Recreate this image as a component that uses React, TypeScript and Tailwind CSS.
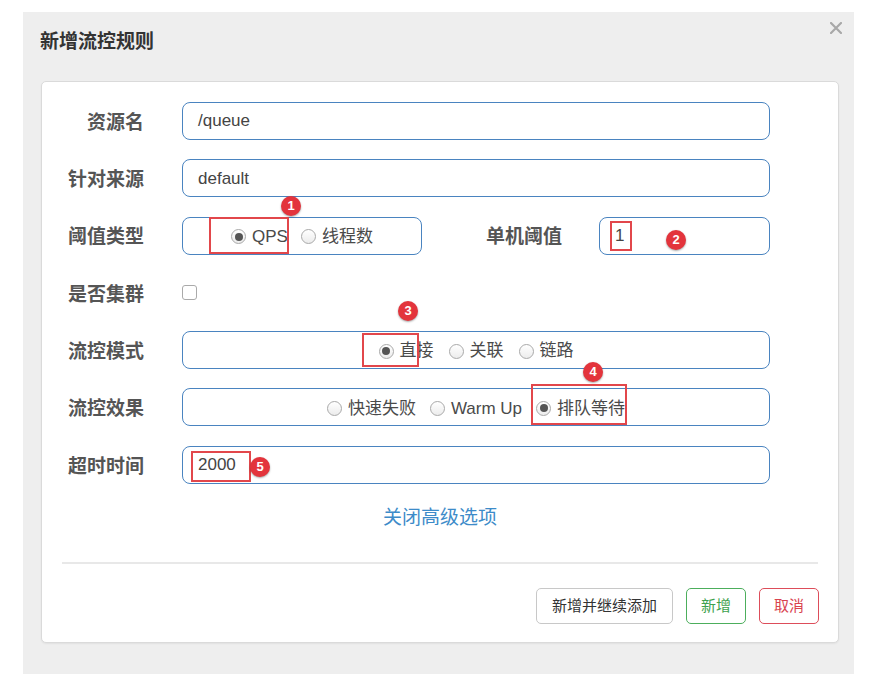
import React from 'react'

const font = { fontFamily: '"Liberation Sans", "Noto Sans CJK SC", sans-serif' }

function Radio({ checked }: { checked?: boolean }) {
  return (
    <span className="inline-flex h-[15px] w-[15px] shrink-0 items-center justify-center rounded-full border border-[#a9a9a9] bg-gradient-to-b from-white to-[#ececec]">
      {checked && <span className="h-[8px] w-[8px] rounded-full bg-[#555]" />}
    </span>
  )
}

function RadioItem({ label, checked }: { label: string; checked?: boolean }) {
  return (
    <label className="flex items-center gap-[6px] text-[#4a4a4a]">
      <Radio checked={checked} />
      <span>{label}</span>
    </label>
  )
}

function Label({ children, w = 'w-[102px]' }: { children: React.ReactNode; w?: string }) {
  return <div className={`${w} shrink-0 pt-[4px] text-right text-[19px] font-bold text-[#555]`}>{children}</div>
}

const box = 'h-[38px] rounded-[8px] border-[1.5px] border-[#4a84c0] bg-white text-[17px] text-[#444]'

function Badge({ n, x, y }: { n: number; x: number; y: number }) {
  return (
    <div
      className="absolute flex h-[20px] w-[20px] items-center justify-center rounded-full bg-[#e3343c] text-[13px] font-bold text-white shadow-[0_1px_2px_rgba(0,0,0,0.35)]"
      style={{ left: x - 10, top: y - 10 }}
    >
      {n}
    </div>
  )
}

function Mark({ x, y, w, h }: { x: number; y: number; w: number; h: number }) {
  return <div className="absolute border-2 border-[#e2474b]" style={{ left: x, top: y, width: w, height: h }} />
}

export default function App() {
  return (
    <div className="relative h-[694px] w-[882px] bg-white" style={font}>
      <div className="pl-[23px] pt-[12px]">
        <div className="relative h-[662px] w-[831px] bg-[#eeeeee]">
          <div className="h-[69px] pl-[17px] pt-[19px] text-[19px] font-bold leading-[22px] text-[#333]">
            新增流控规则
          </div>
          <svg className="absolute left-[807px] top-[10px]" width="12" height="12" viewBox="0 0 12 12">
            <path d="M1 1 L11 11 M11 1 L1 11" stroke="#a8a8a8" strokeWidth="2.2" strokeLinecap="round" />
          </svg>

          <div className="ml-[18px] flex h-[562px] w-[798px] flex-col rounded-[5px] border border-[#dadada] bg-white pt-[20px] shadow-[0_1px_2px_rgba(0,0,0,0.06)]">
            <div className="flex flex-col gap-[19.3px]">
              <div className="flex items-center">
                <Label>资源名</Label>
                <div className={`${box} ml-[38px] flex w-[588px] items-center px-[15px]`}>/queue</div>
              </div>
              <div className="flex items-center">
                <Label>针对来源</Label>
                <div className={`${box} ml-[38px] flex w-[588px] items-center px-[15px]`}>default</div>
              </div>
              <div className="flex items-center">
                <Label>阈值类型</Label>
                <div className={`${box} ml-[38px] flex w-[240px] items-center justify-center gap-[13px] pt-[2px]`}>
                  <RadioItem label="QPS" checked />
                  <RadioItem label="线程数" />
                </div>
                <Label w="w-[140px]">单机阈值</Label>
                <div className={`${box} ml-[37px] flex w-[171px] items-center px-[15px]`}>1</div>
              </div>
              <div className="flex h-[38px] items-center">
                <Label>是否集群</Label>
                <span className="ml-[38px] h-[15px] w-[15px] rounded-[3px] border border-[#aaa] bg-white" />
              </div>
              <div className="flex items-center">
                <Label>流控模式</Label>
                <div className={`${box} ml-[38px] flex w-[588px] items-center justify-center gap-[15px] pt-[2px]`}>
                  <RadioItem label="直接" checked />
                  <RadioItem label="关联" />
                  <RadioItem label="链路" />
                </div>
              </div>
              <div className="flex items-center">
                <Label>流控效果</Label>
                <div className={`${box} ml-[38px] flex w-[588px] items-center justify-center gap-[14px] pt-[2px]`}>
                  <RadioItem label="快速失败" />
                  <RadioItem label="Warm Up" />
                  <RadioItem label="排队等待" checked />
                </div>
              </div>
              <div className="flex items-center">
                <Label>超时时间</Label>
                <div className={`${box} ml-[38px] flex w-[588px] items-center px-[15px]`}>2000</div>
              </div>
            </div>

            <div className="mt-[21px] text-center text-[19px] leading-[26px] text-[#3d8bc9]">关闭高级选项</div>

            <div className="mx-[20px] mt-[31px] h-[2px] bg-[#e8e8e8]" />

            <div className="mt-[24px] flex justify-end gap-[13px] px-[19px] text-[15px]">
              <button className="h-[36px] rounded-[5px] border border-[#c8c8c8] bg-white px-[15px] text-[#333]">
                新增并继续添加
              </button>
              <button className="h-[36px] rounded-[5px] border-[1.5px] border-[#4cae5c] bg-white px-[14px] text-[#3ea14e]">
                新增
              </button>
              <button className="h-[36px] rounded-[5px] border-[1.5px] border-[#dd4d5a] bg-white px-[14px] text-[#d9434f]">
                取消
              </button>
            </div>
          </div>
        </div>
      </div>

      <Mark x={209} y={217} w={80} h={37} />
      <Mark x={610} y={221} w={22} h={30} />
      <Mark x={362} y={333} w={57} h={34} />
      <Mark x={531} y={384} w={96} h={41} />
      <Mark x={191} y={451} w={60} h={31} />

      <Badge n={1} x={291} y={206} />
      <Badge n={2} x={676} y={240} />
      <Badge n={3} x={408} y={311} />
      <Badge n={4} x={593} y={372} />
      <Badge n={5} x={260} y={467} />
    </div>
  )
}
